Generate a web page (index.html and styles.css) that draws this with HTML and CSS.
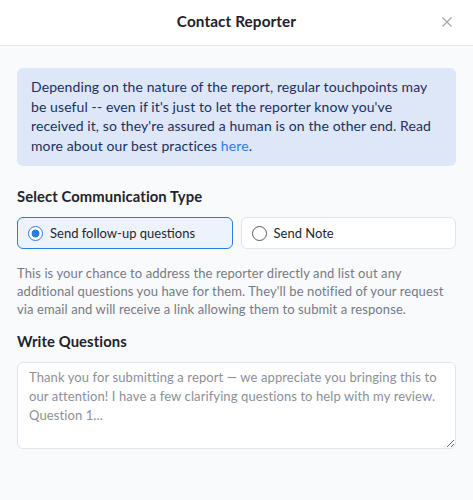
FILE: index.html
```html
<!DOCTYPE html>
<html>
<head>
<meta charset="utf-8">
<link rel="stylesheet" href="styles.css">
</head>
<body>
<div class="modal">
  <header class="header">
    <h1 class="title">Contact Reporter</h1>
    <button class="close" aria-label="Close">
      <svg width="10" height="10" viewBox="0 0 10 10"><path d="M0.5 0.5L9.5 9.5M9.5 0.5L0.5 9.5" stroke="#a0a4ab" stroke-width="1.2" fill="none"/></svg>
    </button>
  </header>
  <div class="body">
    <div class="info">Depending on the nature of the report, regular touchpoints may be useful -- even if it's just to let the reporter know you've received it, so they're assured a human is on the other end. Read more about our best practices <a href="#" class="link">here</a>.</div>
    <h2 class="label">Select Communication Type</h2>
    <div class="options">
      <label class="option selected"><span class="radio on"></span>Send follow-up questions</label>
      <label class="option"><span class="radio"></span>Send Note</label>
    </div>
    <p class="help">This is your chance to address the reporter directly and list out any additional questions you have for them. They'll be notified of your request via email and will receive a link allowing them to submit a response.</p>
    <h2 class="label label2">Write Questions</h2>
    <textarea class="textarea" placeholder="Thank you for submitting a report — we appreciate you bringing this to our attention! I have a few clarifying questions to help with my review. Question 1..."></textarea>
  </div>
</div>
</body>
</html>
```
FILE: styles.css
```css
html, body { margin: 0; padding: 0; }
body {
  font-family: Lato, "Noto Sans", sans-serif;
  background: #f9fafc;
  width: 473px;
  height: 500px;
  overflow: hidden;
  letter-spacing: 0.1px;
}
.modal { width: 473px; }
.header {
  height: 45px;
  background: #ffffff;
  border-bottom: 1px solid #e3e5e9;
  display: flex;
  align-items: center;
  justify-content: center;
  position: relative;
}
.title {
  margin: 0;
  font-size: 15.3px;
  font-weight: 700;
  color: #1d2129;
  padding-bottom: 4px;
}
.close {
  position: absolute;
  right: 21px;
  top: 17px;
  border: 0;
  background: transparent;
  padding: 0;
  width: 10px;
  height: 10px;
  display: block;
}
.close svg { display: block; }
.body { padding: 22px 17px 0 17px; }
.info {
  background: #dde7f7;
  border-radius: 6px;
  padding: 9px 14px 11px 14px;
  color: #1c2f5e;
  font-size: 14px;
  line-height: 19.5px;
}
.link { color: #2a7de1; text-decoration: none; }
.label {
  margin: 20px 0 0 0;
  font-size: 14.8px;
  font-weight: 700;
  color: #1f232b;
  line-height: 20px;
}
.options {
  display: grid;
  grid-template-columns: 1fr 1fr;
  gap: 8px;
  margin-top: 11px;
}
.option {
  height: 32px;
  box-sizing: border-box;
  border: 1px solid #e1e4e9;
  border-radius: 6px;
  background: #ffffff;
  display: flex;
  align-items: center;
  padding-left: 10px;
  font-size: 13px;
  letter-spacing: 0;
  color: #24282f;
  gap: 7px;
}
.option.selected {
  border-color: #2a7de1;
  background: #edf3fc;
}
.radio {
  width: 15px;
  height: 15px;
  box-sizing: border-box;
  border-radius: 50%;
  border: 1.5px solid #555a62;
  background: #fff;
  flex: none;
}
.radio.on {
  border-color: #2a7de1;
  background: radial-gradient(circle, #2a7de1 0 3.6px, #fff 4.3px);
}
.help {
  margin: 15px 0 0 0;
  font-size: 13px;
  line-height: 18px;
  color: #767b84;
}
.label2 { margin-top: 13px; }
.textarea {
  display: block;
  box-sizing: border-box;
  width: 100%;
  height: 87px;
  margin-top: 11px;
  border: 1px solid #e1e4e9;
  border-radius: 6px;
  background: #fff;
  padding: 5px 8px 5px 11px;
  font-family: Lato, "Noto Sans", sans-serif;
  letter-spacing: 0.1px;
  font-size: 13px;
  line-height: 19px;
  color: #24282f;
  resize: vertical;
}
.textarea::placeholder { color: #8b9099; opacity: 1; }
```
